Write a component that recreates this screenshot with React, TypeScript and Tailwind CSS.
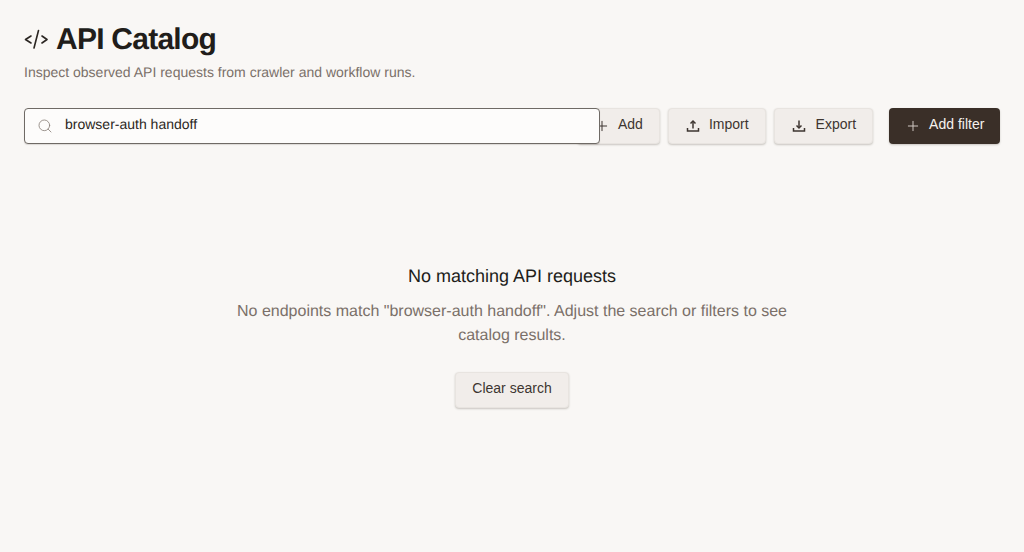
import { Plus, Search } from "lucide-react";

const font = "font-['Liberation_Sans',Arial,sans-serif] [text-rendering:geometricPrecision]";

const toolBtn =
  "flex h-9 shrink-0 items-center gap-2 whitespace-nowrap rounded-[4px] border border-[#e8e4e0] bg-[#f1edea] px-4 text-[14px] text-[#3d3530] shadow-[0_1px_2px_rgba(60,50,40,0.25)]";

function CodeIcon() {
  return (
    <svg viewBox="0 0 24 24" className="h-6 w-6 shrink-0 text-[#2b2622]" fill="none" stroke="currentColor" strokeWidth={1.6} strokeLinecap="round" strokeLinejoin="round">
      <path d="M7 9 1.5 12.5 7 16" />
      <path d="M14.5 3.5 10 21" />
      <path d="M18 9 23 12.5 18 16" />
    </svg>
  );
}

function UploadIcon() {
  return (
    <svg viewBox="0 0 16 16" className="h-4 w-4 shrink-0" fill="none" stroke="currentColor" strokeWidth={1.5}>
      <path d="M2.5 10v3h11v-3" />
      <path d="M8 10.5V3" />
      <path d="M5.5 5.5 8 3l2.5 2.5" />
    </svg>
  );
}

function DownloadIcon() {
  return (
    <svg viewBox="0 0 16 16" className="h-4 w-4 shrink-0" fill="none" stroke="currentColor" strokeWidth={1.5}>
      <path d="M2.5 10v3h11v-3" />
      <path d="M8 2.5V10" />
      <path d="M5.5 7.5 8 10l2.5-2.5" />
    </svg>
  );
}

export default function App() {
  return (
    <div className={`${font} min-h-[552px] bg-[#f9f7f5] p-6 text-[#211d1a]`}>
      <div className="flex items-center gap-2">
        <CodeIcon />
        <h1 className="translate-y-px text-[30px] leading-[30px] font-bold tracking-tight">API Catalog</h1>
      </div>
      <p className="mt-2 text-[14px] leading-5 text-[#7b7069]">
        Inspect observed API requests from crawler and workflow runs.
      </p>

      <div className="mt-[26px] flex items-center">
        <div className="relative z-10 flex h-9 w-[576px] shrink-0 items-center rounded-[4px] border border-[#6f6a65] bg-[#fdfcfb] pl-3 shadow-[0_1px_1px_rgba(60,50,40,0.15)]">
          <Search className="h-4 w-4 text-[#8a817a]" strokeWidth={1.25} />
          <span className="ml-3 -translate-y-0.5 text-[14px] text-[#2b2622]">browser-auth handoff</span>
        </div>
        <button className={`${toolBtn} -ml-[23px]`}>
          <Plus className="h-4 w-4" strokeWidth={1.5} />
          <span className="-translate-y-0.5">Add</span>
        </button>
        <button className={`${toolBtn} ml-2`}>
          <UploadIcon />
          <span className="-translate-y-0.5">Import</span>
        </button>
        <button className={`${toolBtn} ml-2 gap-[9px]`}>
          <DownloadIcon />
          <span className="-translate-y-0.5">Export</span>
        </button>
        <button className="ml-4 flex h-9 shrink-0 items-center gap-2 whitespace-nowrap rounded-[4px] bg-[#3a2f28] px-4 text-[14px] text-[#f6f2ee] shadow-[0_1px_2px_rgba(60,50,40,0.25)]">
          <Plus className="h-4 w-4 text-[#cfc8c2]" strokeWidth={1.5} />
          <span className="-translate-y-0.5">Add filter</span>
        </button>
      </div>

      <div className="mt-[120px] flex flex-col items-center text-center">
        <h2 className="text-[18px] leading-6 text-[#211d1a]">No matching API requests</h2>
        <p className="mt-3 w-[576px] text-[16px] leading-6 text-[#7b7069]">
          No endpoints match "browser-auth handoff". Adjust the search or filters to see catalog results.
        </p>
        <button className={`${toolBtn} mt-6`}>
          <span className="-translate-y-0.5">Clear search</span>
        </button>
      </div>
    </div>
  );
}
